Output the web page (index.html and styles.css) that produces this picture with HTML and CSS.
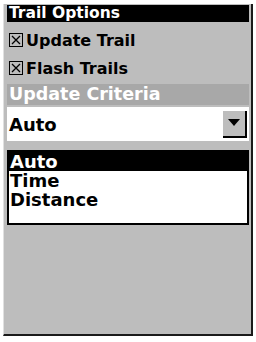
FILE: index.html
```html
<!DOCTYPE html>
<html>
<head>
  <title>Trail Options</title>
  <link rel="stylesheet" href="styles.css">
</head>
<body>
  <div class="screen">
    <div class="title-bar">Trail Options</div>

    <div class="check-row">
      <span class="check-box">
        <svg width="14" height="14" viewBox="0 0 14 14">
          <rect x="0.5" y="0.5" width="13" height="13" fill="none" stroke="#000"/>
          <path d="M3 3 L11 11 M11 3 L3 11" stroke="#000" stroke-width="1.3"/>
        </svg>
      </span>
      <span>Update Trail</span>
    </div>

    <div class="check-row">
      <span class="check-box">
        <svg width="14" height="14" viewBox="0 0 14 14">
          <rect x="0.5" y="0.5" width="13" height="13" fill="none" stroke="#000"/>
          <path d="M3 3 L11 11 M11 3 L3 11" stroke="#000" stroke-width="1.3"/>
        </svg>
      </span>
      <span>Flash Trails</span>
    </div>

    <div class="section-bar">Update Criteria</div>

    <div class="select-box">
      <span class="select-value">Auto</span>
      <span class="select-button">
        <svg width="12" height="8" viewBox="0 0 12 8">
          <path d="M0 0 L12 0 L6 7 Z" fill="#000"/>
        </svg>
      </span>
    </div>

    <ul class="option-list">
      <li class="selected">Auto</li>
      <li>Time</li>
      <li>Distance</li>
    </ul>
  </div>
</body>
</html>
```

FILE: styles.css
```css
body {
  margin: 0;
  padding: 0;
  background: #fff;
  font-family: "DejaVu Sans", Verdana, sans-serif;
  font-weight: bold;
}

.screen {
  margin: 4px 0 0 3px;
  width: 244px;
  height: 329px;
  padding: 1px 0 0 3px;
  background: #bdbdbd;
  border-left: 1px solid #e0e0e0;
  border-right: 2px solid #1a1a1a;
  border-bottom: 2px solid #1a1a1a;
}

.title-bar {
  background: #000;
  color: #fff;
  font-size: 15.5px;
  height: 17px;
  line-height: 17px;
  padding-left: 2px;
  margin-right: 2px;
  margin-bottom: 4px;
}

.check-row {
  display: flex;
  align-items: center;
  height: 28px;
  font-size: 16px;
  color: #000;
}

.check-box {
  display: flex;
  margin: 0 3px 0 2px;
}

.section-bar {
  background: #a8a8a8;
  color: #fff;
  font-size: 17.5px;
  height: 21px;
  line-height: 21px;
  padding-left: 2px;
  margin-right: 2px;
  margin-top: 2px;
}

.select-box {
  display: flex;
  align-items: center;
  justify-content: space-between;
  background: #fff;
  height: 34px;
  margin-right: 2px;
  margin-top: 2px;
  font-size: 18px;
}

.select-value {
  padding-left: 2px;
}

.select-button {
  display: flex;
  align-items: center;
  justify-content: center;
  width: 22px;
  height: 25px;
  background: #bdbdbd;
  border-right: 2px solid #000;
  border-bottom: 2px solid #000;
  margin-right: 2px;
}

.option-list {
  list-style: none;
  margin: 9px 2px 0 0;
  padding: 0 0 14px 0;
  background: #fff;
  border: 2px solid #000;
  font-size: 18px;
}

.option-list li {
  height: 19px;
  line-height: 19px;
  padding-left: 1px;
}

.option-list li.selected {
  background: #000;
  color: #fff;
}
```
